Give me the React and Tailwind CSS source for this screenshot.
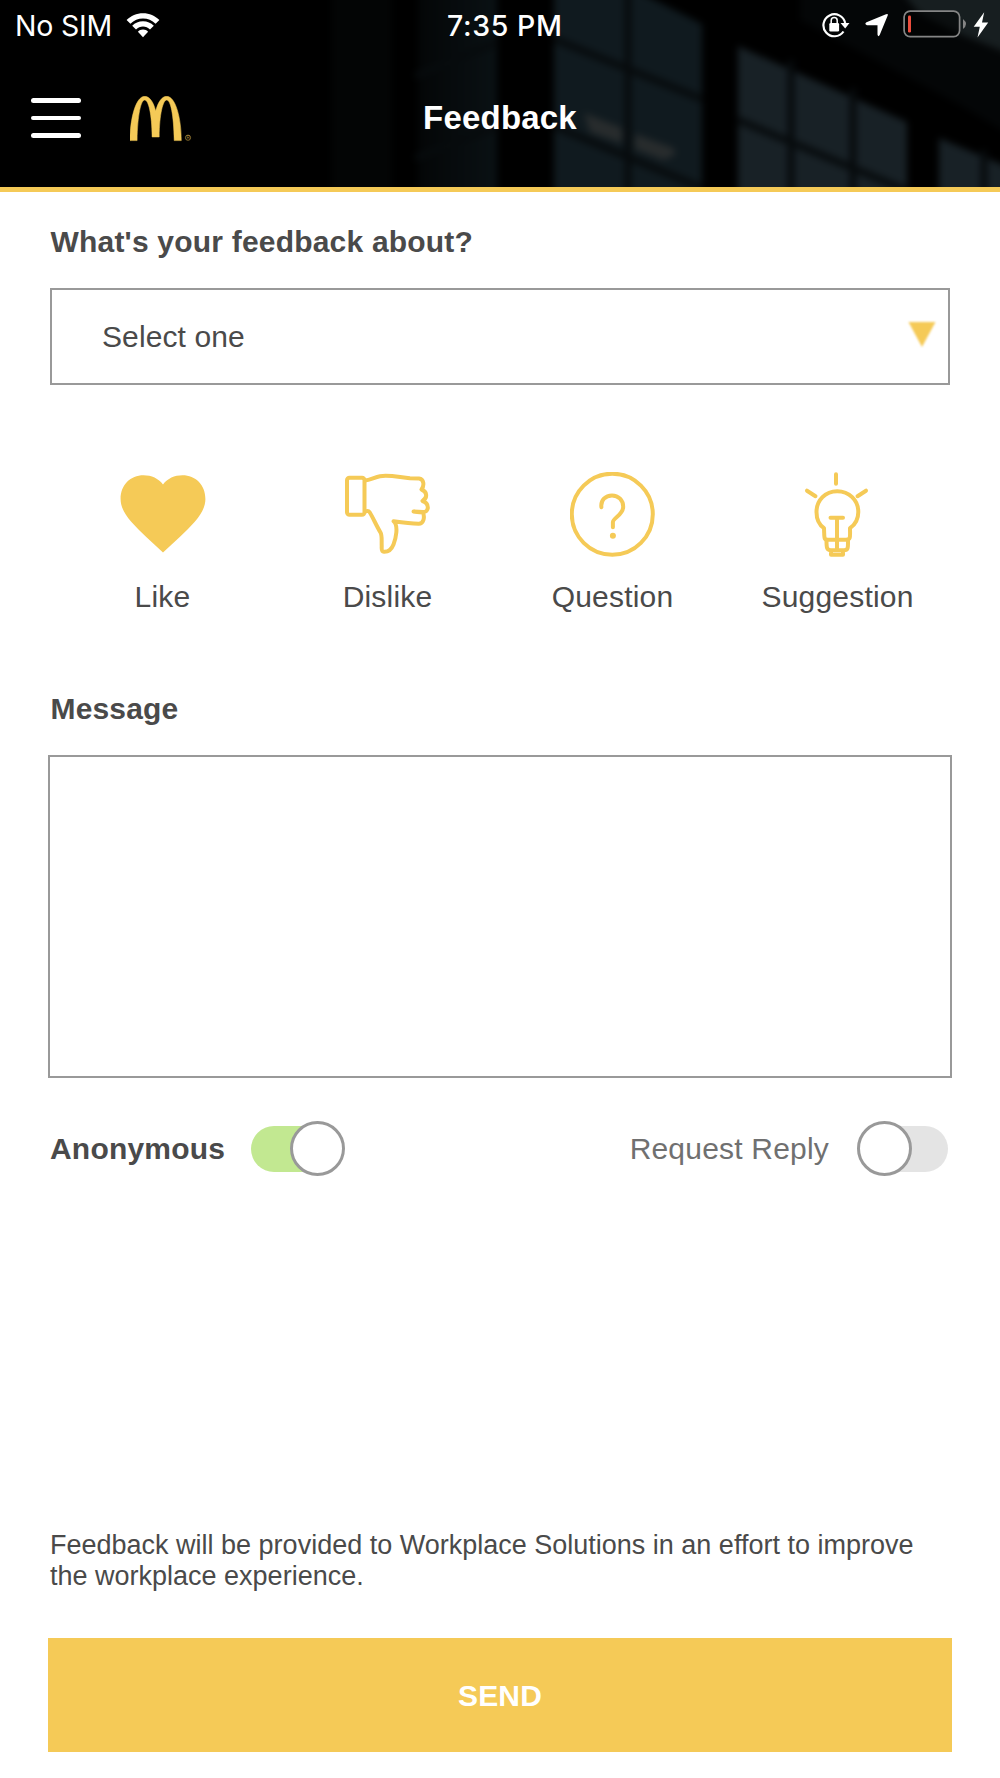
const FEEDBACK_TYPES = [
    { name: 'Like', icon: HeartIcon },
    { name: 'Dislike', icon: ThumbDownIcon },
    { name: 'Question', icon: QuestionIcon },
    { name: 'Suggestion', icon: BulbIcon },
];

function HeartIcon() {
    return (
        <svg viewBox="0 0 86 86" className="size-[86px] fill-[#f5ca57]">
            <path d="M43 80.500C32 70 20 60 11 49.500C4 41 .600 34.500 .600 27C.600 13 10.500 3.300 23.500 3.300C31.500 3.300 38.500 6.500 43 12.500C47.500 6.500 54.500 3.300 62.500 3.300C75.500 3.300 85.400 13 85.400 27C85.400 34.500 82 41 75 49.500C66 60 54 70 43 80.500Z" />
        </svg>
    );
}

function ThumbDownIcon() {
    return (
        <svg
            viewBox="1 .5 86 86"
            className="size-[86px] fill-none stroke-[#f5ca57] stroke-4"
            strokeLinecap="round"
            strokeLinejoin="round"
        >
            <rect x="3" y="6.300" width="17.500" height="37" rx="2.500" />
            <path d="M21 9C26 8.500 31 5.500 36 4.700C46 3.200 56 6 66 6.700L75 7C80 7.500 80.500 14 77.500 18C83 20 84 26 78.500 29.500C86 32 85 41 79 40.500L69.500 40C72 40.500 76 40.800 79 41C81 46 79.500 52.500 74.500 52.300C67 52 59 51 49.500 49.700C55 54 51.500 68 49.500 73C47.500 78 44.500 80.500 40 80.300C37 80 37.800 78 37.700 74C37.500 69 38.200 64 36.500 61C32 53.500 29 46 25.500 40.500C24.500 39 23 39.300 21.500 39.800" />
        </svg>
    );
}

function QuestionIcon() {
    return (
        <svg viewBox="1 .8 86 86" className="size-[86px] fill-none stroke-[#f5ca57] stroke-4" strokeLinecap="round">
            <circle cx="43.300" cy="43" r="40.500" />
            <path d="M32.400 36C31.500 29 36.500 24.200 43 24.200C49.500 24.200 54.200 29 54.200 35.500C54.200 44 43.900 46.500 43.900 51V56" />
            <circle cx="43.900" cy="64.500" r="3" className="fill-[#f5ca57] stroke-none" />
        </svg>
    );
}

function BulbIcon() {
    return (
        <svg
            viewBox="1 .8 86 86"
            className="size-[86px] fill-none stroke-[#f5ca57] stroke-4"
            strokeLinecap="round"
            strokeLinejoin="round"
        >
            <path d="M42 3V12.500M13 19.500L21.500 25M72 19.500L63.500 25" />
            <path d="M30 57C30.500 67 29.500 68.500 34 68.500H52C57 68.500 56 66 56 57C61 53.500 64.300 47.500 64.300 40.800C64.300 29 55 20 43.200 20C31.500 20 22.500 29 22.500 40.800C22.500 47.500 25 53.500 30 57Z" />
            <path d="M36.500 46.500H49M43 47V78M32.500 69C32.500 76 32.500 79 37 79H50C54.500 79 54 76 54 69M37 79V83.500H49V79" />
        </svg>
    );
}

function ArchesLogo() {
    return (
        <svg viewBox="0 0 62 46" className="h-[46px] w-[62px] translate-y-px">
            <path
                className="fill-[#f5ca57] stroke-[#f5ca57] stroke-[.5]"
                d="M0 44.600C0 22 6 .300 14.700 .300C19.500 .300 23.500 6 25.700 15C28 6 32 .300 36.700 .300C45.500 .300 51.300 22 51.300 44.600H44.200C43.700 18 40.500 4 36.700 4C33 4 29.400 18 29.200 41H22.100C21.900 18 18.500 4 14.700 4C11 4 7.600 18 7.100 44.600Z"
            />
            <circle cx="58" cy="41.700" r="2.600" className="fill-none stroke-[#a58638] stroke-[.8]" />
            <text x="58" y="43.300" textAnchor="middle" className="fill-[#a58638] font-['Liberation_Sans'] text-[4.500px]">
                R
            </text>
        </svg>
    );
}

// Dim view of factory windows behind the navigation bar
function HeaderBackdrop() {
    return (
        <svg viewBox="0 0 1000 187" className="absolute inset-0 h-[187px] w-full" aria-hidden="true">
            <defs>
                <filter id="soft" colorInterpolationFilters="sRGB">
                    <feGaussianBlur stdDeviation="3.500" />
                </filter>
                <linearGradient id="fade">
                    <stop offset="0" stopColor="#040607" />
                    <stop offset="1" stopColor="#0a1114" />
                </linearGradient>
            </defs>
            <g filter="url(#soft)">
                <path fill="#030505" d="M332 -10H392V200H332Z" />
                <path fill="url(#fade)" d="M418 -10H497V200H418Z" />
                <path fill="#101a1f" d="M554 -10H635L702 24V200H554Z" />
                <path fill="#182126" d="M738 46L907 122V200H738Z" />
                <path fill="#182126" d="M939 138L1020 172V200H939Z" />
                <path fill="#060a0c" d="M800 -10H1010V135L960 105L800 20Z" opacity=".6" />
                <path fill="#171e20" d="M900 -10H1010V54L960 34L920 14Z" />
                <path
                    className="fill-none stroke-[#070b0d] stroke-7"
                    d="M415 76L498 42M415 158L498 126M554 39L702 99M554 126L702 188M628 -10V200M738 120L910 192M791 60V200M853 88V200M984 150V200"
                />
                <path fill="#282c2d" d="M584 113L622 128V143L590 132ZM635 134L673 148L676 154L664 160L635 149Z" />
            </g>
        </svg>
    );
}

function StatusBar() {
    return (
        <div className="relative flex h-[51px] items-center text-[28.500px] leading-[51px] text-white">
            <span className="ml-[15px] w-[98px] whitespace-nowrap font-[Inter] text-[28.500px] tracking-[-0.2px]">
                No SIM
            </span>
            <svg viewBox="0 0 34 25" className="mt-[-1px] ml-[13px] h-[25px] w-[34px] fill-white">
                <path d="M17 .200C23.500 .200 29 2.800 33.400 7L29.600 10.800C26 7.500 21.800 5.600 17 5.600S8 7.500 4.400 10.800L.600 7C5 2.800 10.500 .200 17 .200Z" />
                <path d="M17 8.300C21.300 8.300 25 10 27.800 12.700L24 16.500C22 14.700 19.700 13.600 17 13.600S12 14.700 10 16.500L6.200 12.700C9 10 12.700 8.300 17 8.300Z" />
                <path d="M17 16.600C19.200 16.600 20.800 17.300 22.100 18.800L17 24.300L11.900 18.800C13.200 17.300 14.800 16.600 17 16.600Z" />
            </svg>
            <span className="ml-[287px] w-[118px] whitespace-nowrap font-[Inter] font-medium tracking-[.6px]">
                7:35 PM
            </span>
            {/* Rotation lock */}
            <svg viewBox="0 0 28 26" className="mt-[-2px] ml-[257px] h-[26px] w-7">
                <path
                    className="fill-none stroke-white stroke-[2.200]"
                    d="M21.500 19.500A11 11 0 1 1 23.200 11"
                />
                <path className="fill-white" d="M18.500 11H27.500L23.200 16.500Z" />
                <rect x="7.300" y="11" width="9.800" height="8.600" rx="1.300" className="fill-white" />
                <path className="fill-none stroke-white stroke-[1.500]" d="M9.200 11.500V8.500C9.200 4.600 15.200 4.600 15.200 8.500V11.500" />
            </svg>
            <svg viewBox="0 0 24 24" className="mt-[-1px] ml-[15px] size-6 fill-white">
                <path d="M21 1.300Q23.700 .300 22.500 3L14.700 22Q13.200 24.500 12.500 21.500V12.200H2Q-1 11 1.500 9.300Z" />
            </svg>
            {/* Battery */}
            <svg viewBox="0 0 64 28" className="mt-[-3px] ml-[14px] h-7 w-16">
                <rect x="1.100" y="1.100" width="55.500" height="25.500" rx="6" className="fill-black/50 stroke-[#858585] stroke-[1.700]" />
                <rect x="5" y="5.500" width="3" height="17" rx="1.200" className="fill-[#eb4d3d]" />
                <path d="M60 9Q66 14 60 19Z" className="fill-[#858585]" />
            </svg>
            <svg viewBox="0 0 16 26" className="mt-[-2px] ml-[6px] h-[26px] w-4 fill-white">
                <path d="M11.200 .300L.700 14.800H6.800L4.500 25.500L15.200 10.600H9Z" />
            </svg>
        </div>
    );
}

function Header() {
    return (
        <header className="relative h-48 overflow-hidden border-b-[5px] border-[#f5ca57] bg-black">
            <HeaderBackdrop />
            <StatusBar />
            <div className="relative grid grid-cols-[1fr_auto_1fr] items-center pt-[44px]">
                <div className="flex items-center">
                    <button aria-label="Menu" className="ml-[31px] flex w-[50px] flex-col gap-[13px]">
                        <span className="h-[4.500px] rounded-full bg-white" />
                        <span className="h-[4.500px] rounded-full bg-white" />
                        <span className="h-[4.500px] rounded-full bg-white" />
                    </button>
                    <div className="ml-[49px]">
                        <ArchesLogo />
                    </div>
                </div>
                <h1 className="text-[33px] leading-[46px] font-bold tracking-[.2px] text-white">Feedback</h1>
            </div>
        </header>
    );
}

function Toggle({ checked }) {
    return (
        <span
            role="switch"
            aria-checked={checked}
            className={
                checked
                    ? 'flex h-[46px] w-[92px] items-center justify-end rounded-full bg-[#c2e891]'
                    : 'flex h-[46px] w-[91px] items-center rounded-full bg-[#e4e4e4]'
            }
        >
            <span
                className={
                    checked
                        ? '-mr-[2px] size-[55px] shrink-0 rounded-full border-3 border-[#999] bg-white'
                        : 'size-[55px] shrink-0 rounded-full border-3 border-[#999] bg-white'
                }
            />
        </span>
    );
}

export default function App() {
    return (
        <div className="h-[1778px] w-[1000px] overflow-hidden bg-white font-['Liberation_Sans',Arial,sans-serif] text-[30px] leading-[40px] text-[#4a4a4a]">
            <Header />

            <main className="flex flex-col px-12">
                <h2 className="mt-[30px] ml-[2.500px] font-bold tracking-[.2px]">What's your feedback about?</h2>
                <div className="mx-[2px] mt-[26px] flex h-[97px] items-center justify-between border-2 border-[#999] pr-3 pl-[50px]">
                    <span className="tracking-[.1px]">Select one</span>
                    <svg viewBox="0 0 28 28" className="-mt-[3px] size-7 fill-[#f5ca57] blur-[1px]">
                        <path d="M.500 1H27.500L14 26Z" />
                    </svg>
                </div>

                {/* Feedback types */}
                <div className="mx-[2px] mt-[87px] grid grid-cols-4">
                    {FEEDBACK_TYPES.map(({ name, icon: Icon }) => (
                        <button key={name} className="flex flex-col items-center gap-[19px]">
                            <Icon />
                            <span className="tracking-[.2px]">{name}</span>
                        </button>
                    ))}
                </div>

                <h2 className="mt-[72px] ml-[2.500px] font-bold tracking-[.15px]">Message</h2>
                <textarea className="mt-[26px] block h-[323px] w-full resize-none border-2 border-[#999] outline-none" />

                <div className="mt-[43px] flex h-[55px] items-center">
                    <span className="ml-[2px] w-[201px] font-bold tracking-[.2px]">Anonymous</span>
                    <Toggle checked />
                    <span className="mr-[28px] ml-auto tracking-[.2px] text-[#707070]">Request Reply</span>
                    <Toggle checked={false} />
                    <span className="w-1" />
                </div>

                <p className="mt-[354px] ml-[2px] text-[27px] leading-[31px]">
                    Feedback will be provided to Workplace Solutions in an effort to improve the workplace experience.
                </p>
                <button className="mt-[46px] h-[114px] bg-[#f5ca57] pt-[2px] font-bold tracking-[.2px] text-white">
                    SEND
                </button>
            </main>
        </div>
    );
}
